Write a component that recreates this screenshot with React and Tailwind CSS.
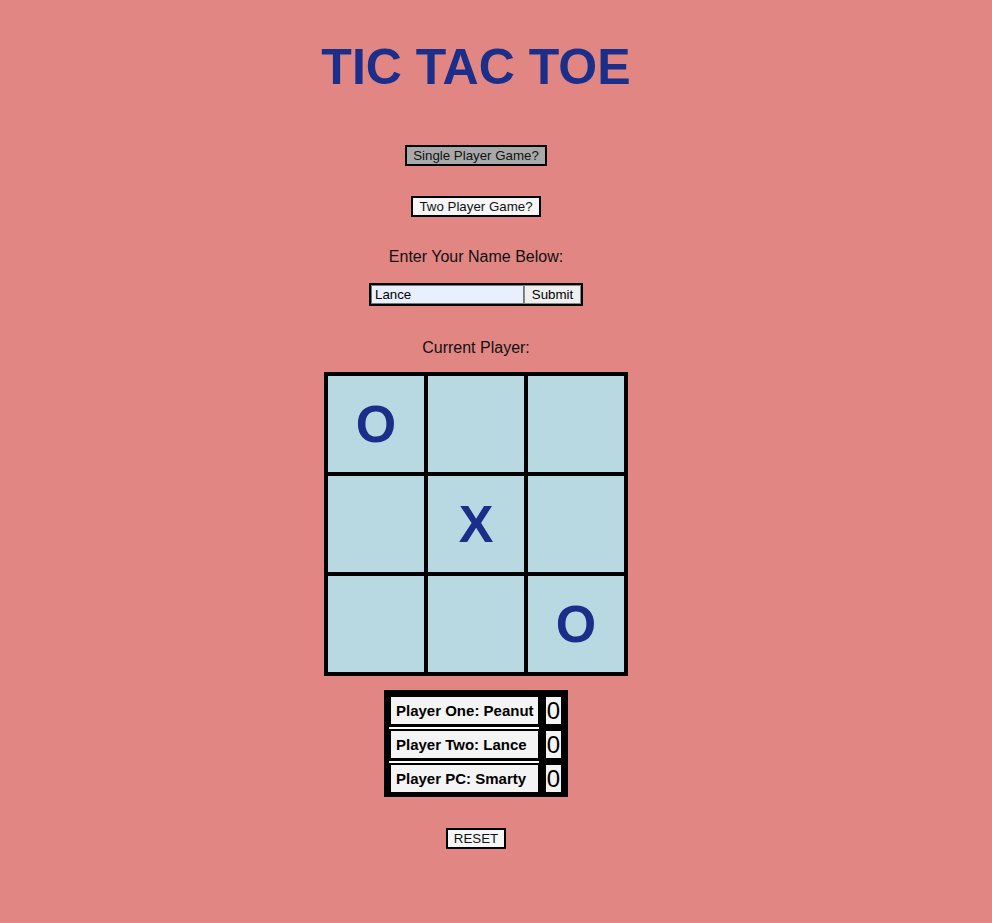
const board = ["O", "", "", "", "X", "", "", "", "O"];

const players = [
  { label: "Player One: Peanut", score: 0 },
  { label: "Player Two: Lance", score: 0 },
  { label: "Player PC: Smarty", score: 0 },
];

const App = () => {
  return (
    <div className="min-h-[923px] bg-[#e18683] font-['Liberation_Sans',Arial,sans-serif] text-black">
      <div className="w-[952px] flex flex-col items-center">
        {/* Title */}
        <h1 className="mt-[38px] text-[50px] leading-[58px] font-bold text-[#1b2e8a]">TIC TAC TOE</h1>

        {/* Mode buttons */}
        <button className="mt-[49px] w-[142px] h-[21px] border-2 border-black bg-[#a9a9a9] text-[13.3px] leading-[15px] text-[#111]">
          Single Player Game?
        </button>
        <button className="mt-[30px] w-[130px] h-[21px] border-2 border-black bg-[#f6f6f6] text-[13.3px] leading-[15px] text-[#111]">
          Two Player Game?
        </button>

        {/* Name form */}
        <p className="mt-[30px] text-[16px] leading-[20px] text-[#111]">Enter Your Name Below:</p>
        <div className="mt-[16px] flex border-2 border-black h-[23px] w-[214px]">
          <input
            defaultValue="Lance"
            className="w-[153px] h-full bg-[#e8f0fe] border border-[#777] px-[3px] text-[13.3px] outline-none"
          />
          <button className="w-[57px] h-full bg-[#efefef] border border-[#888] text-[13.3px] leading-[15px]">Submit</button>
        </div>

        <p className="mt-[32px] text-[16px] leading-[20px] text-[#111]">Current Player:</p>

        {/* Board */}
        <div className="mt-[14px] grid grid-cols-3 gap-[4px] p-[4px] bg-black">
          {board.map((mark, i) => (
            <div
              key={i}
              className="w-[96px] h-[96px] bg-[#b8d8e2] flex items-center justify-center text-[52px] font-bold text-[#1b2e8a]"
            >
              {mark}
            </div>
          ))}
        </div>

        {/* Scores */}
        <div className="mt-[14px] w-[184px] bg-black pt-[7px] pb-[5px] pl-[5px] pr-[7px] flex flex-col">
          {players.map((p, i) => (
            <div key={p.label} className="flex flex-col">
              {i > 0 && (
                <div className="mt-[3px] mb-[2px] w-[150px] h-[2px] bg-white" />
              )}
              <div className="flex pl-[2px] gap-[8px]">
                <div className="w-[147px] h-[27px] bg-[#f4f4f4] pl-[5px] text-[15px] font-bold leading-[28px] whitespace-nowrap">
                  {p.label}
                </div>
                <div className="w-[15px] h-[27px] bg-[#f4f4f4] text-[24px] leading-[27px] text-center">
                  {p.score}
                </div>
              </div>
            </div>
          ))}
        </div>

        <button className="mt-[31px] w-[60px] h-[21px] border-2 border-black bg-[#f6f6f6] text-[13.3px] leading-[15px] text-[#111]">
          RESET
        </button>
      </div>
    </div>
  );
};

export default App;
